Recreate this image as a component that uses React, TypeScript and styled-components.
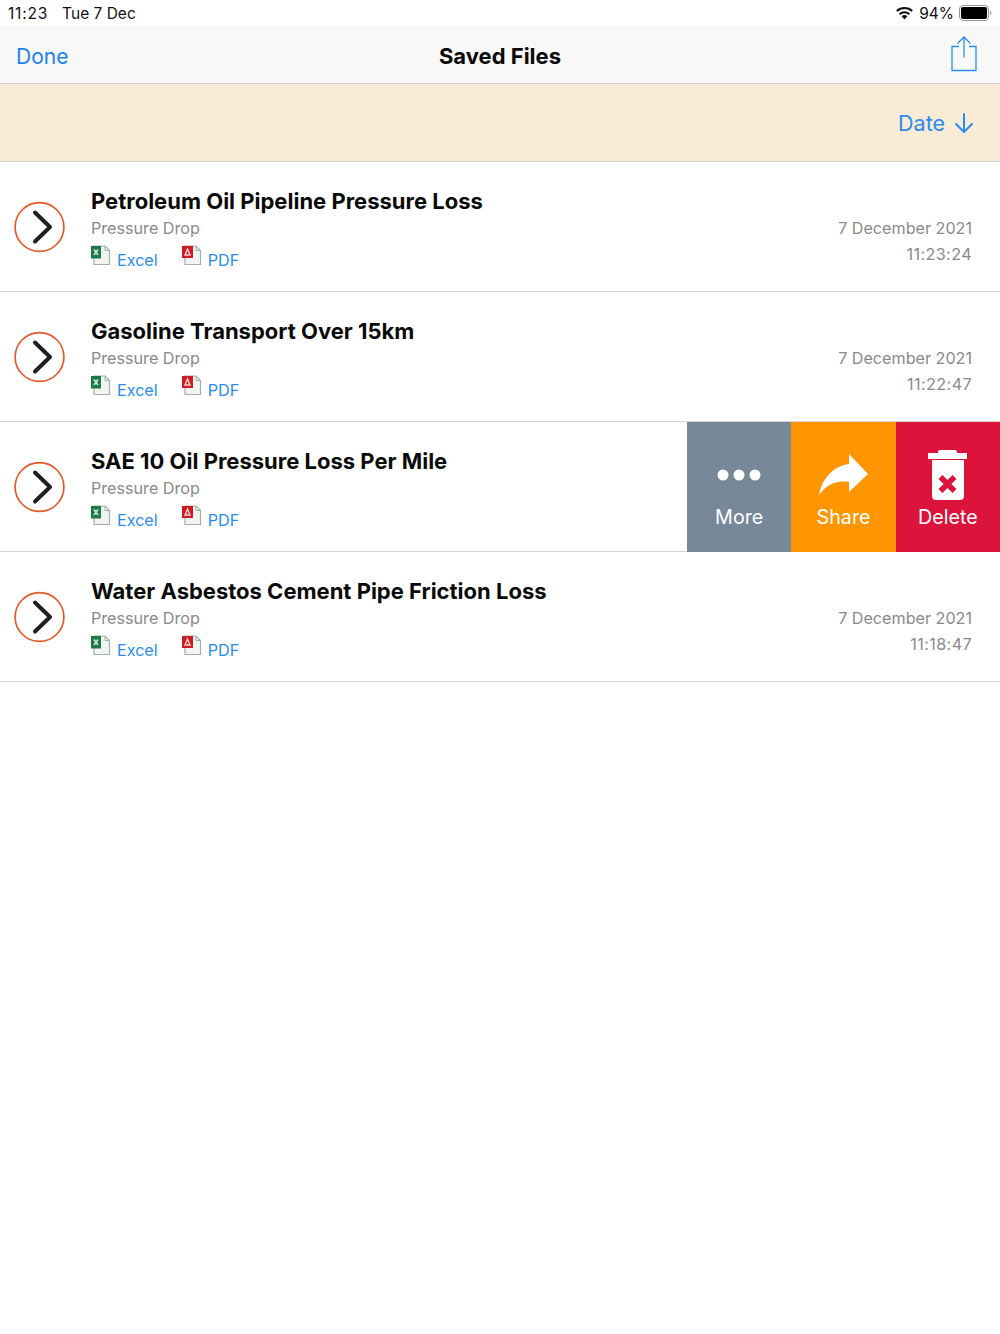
import styled, { createGlobalStyle } from "styled-components"

const GlobalStyle = createGlobalStyle`
  html, body {
    margin: 0;
    padding: 0;
    background: #fff;
    font-family: Inter, "Liberation Sans", Arial, sans-serif;
  }
`

const Page = styled.div`
  width: 1000px;
  height: 1334px;
  display: flex;
  flex-direction: column;
  background: #fff;
  overflow: hidden;
`

const StatusBar = styled.div`
  height: 26px;
  padding: 0 7px 0 8px;
  box-sizing: border-box;
  display: flex;
  align-items: center;
  justify-content: space-between;
  font-size: 15.5px;
  color: #111;
`

const StatusGroup = styled.div<{ $gap: number }>`
  display: flex;
  align-items: center;
  gap: ${(p) => p.$gap}px;
`

const Clock = styled.span`
  letter-spacing: 0.8px;
`

const NavBar = styled.div`
  height: 58px;
  padding: 2px 23px 0 16px;
  box-sizing: border-box;
  display: flex;
  align-items: center;
  justify-content: space-between;
  background: #f8f8f8;
  border-bottom: 1px solid #cfcfcf;
`

const NavLink = styled.div`
  width: 87px;
  padding-top: 1px;
  font-size: 21px;
  color: #1a7ff0;
`

const NavTitle = styled.div`
  font-size: 22px;
  font-weight: 700;
  color: #0a0a0a;
`

const NavAction = styled.div`
  width: 80px;
  margin-top: -4px;
  display: flex;
  justify-content: flex-end;
`

const SortBar = styled.div`
  height: 78px;
  padding: 0 26px 0 0;
  box-sizing: border-box;
  display: flex;
  align-items: center;
  justify-content: flex-end;
  gap: 9px;
  background: #faebd7;
  border-bottom: 1px solid #d6d6d6;
  font-size: 21.5px;
  color: #2a8cf0;
`

const Row = styled.div`
  height: 130px;
  box-sizing: border-box;
  display: flex;
  align-items: stretch;
  border-bottom: 1px solid #d4d4d4;
`

const Arrow = styled.div`
  width: 91px;
  flex-shrink: 0;
  padding-left: 14px;
  box-sizing: border-box;
  display: flex;
  align-items: center;
`

const Body = styled.div`
  flex: 1;
  padding-top: 25px;
`

const Title = styled.div`
  font-size: 22px;
  line-height: 28px;
  font-weight: 700;
  color: #0a0a0a;
`

const Subtitle = styled.div`
  margin-top: 1px;
  font-size: 16.15px;
  line-height: 24px;
  color: #8a8a8a;
`

const Files = styled.div`
  margin-top: 5px;
  display: flex;
  gap: 24px;
`

const FileLink = styled.div`
  display: flex;
  align-items: flex-start;
  gap: 6px;
  padding-top: 4px;
  font-size: 16.15px;
  line-height: 23px;
  color: #2a8cf0;
`

const FileIcon = styled.svg`
  margin-top: -4px;
`

const Stamp = styled.div`
  padding: 53px 28px 0 0;
  text-align: right;
  font-size: 16.15px;
  line-height: 26px;
  color: #8a8a8a;
`

const StampTime = styled.span`
  letter-spacing: 0.4px;
`

const Actions = styled.div`
  display: flex;
  margin-bottom: -1px;
`

const ActionButton = styled.div<{ $bg: string }>`
  width: 104.33px;
  display: flex;
  flex-direction: column;
  align-items: center;
  background: ${(p) => p.$bg};
  color: #fff;
  font-size: 19.7px;
`

const ActionIcon = styled.div`
  height: 83px;
  padding-top: 22px;
  box-sizing: border-box;
  display: flex;
  align-items: center;
  justify-content: center;
`

const ActionLabel = styled.div`
  line-height: 24px;
`

const ArrowIcon = () => (
  <svg width="52" height="52" viewBox="0 0 52 52">
    <circle cx="25.5" cy="26" r="24.4" fill="#fff" stroke="#e2592a" strokeWidth="1.7" />
    <path d="M21 11.5 L36 26 L21 40.5" fill="none" stroke="#1f1f1f" strokeWidth="4" strokeLinecap="round" strokeLinejoin="round" />
  </svg>
)

const SheetBack = () => (
  <>
    <path d="M3 1 H14 L18.5 5.5 V19.5 H3 Z" fill="#f2f4f2" stroke="#a3b0a8" strokeWidth="1.2" />
    <path d="M14 1 V5.5 H18.5" fill="none" stroke="#a3b0a8" strokeWidth="1" />
  </>
)

const ExcelIcon = () => (
  <FileIcon width="20" height="21" viewBox="0 0 20 21">
    <SheetBack />
    <rect x="0" y="1" width="10" height="12.5" fill="#1e7a45" />
    <path d="M3 4.5 L7 10 M7 4.5 L3 10" stroke="#d8eadf" strokeWidth="1.5" />
  </FileIcon>
)

const PdfIcon = () => (
  <FileIcon width="20" height="21" viewBox="0 0 20 21">
    <SheetBack />
    <rect x="0" y="1" width="11" height="12" fill="#cf1a24" />
    <path d="M5.5 4 L3 10 H8 Z" fill="none" stroke="#f6d5d5" strokeWidth="1.4" />
  </FileIcon>
)

const FileRow = () => (
  <Files>
    <FileLink>
      <ExcelIcon />
      Excel
    </FileLink>
    <FileLink>
      <PdfIcon />
      PDF
    </FileLink>
  </Files>
)

const files = [
  { title: "Petroleum Oil Pipeline Pressure Loss", time: "11:23:24" },
  { title: "Gasoline Transport Over 15km", time: "11:22:47" },
  { title: "SAE 10 Oil Pressure Loss Per Mile", swiped: true },
  { title: "Water Asbestos Cement Pipe Friction Loss", time: "11:18:47" },
]

export default function App() {
  return (
    <Page>
      <GlobalStyle />
      <StatusBar>
        <StatusGroup $gap={14}>
          <Clock>11:23</Clock>
          <span>Tue 7 Dec</span>
        </StatusGroup>
        <StatusGroup $gap={5}>
          <svg width="19" height="14" viewBox="0 0 19 14">
            <path d="M9.5 13.5 L6.6 10.2 A4.4 4.4 0 0 1 12.4 10.2 Z" fill="#111" />
            <path d="M4.6 8.2 A7.4 7.4 0 0 1 14.4 8.2 M1.8 5 A11.4 11.4 0 0 1 17.2 5" fill="none" stroke="#111" strokeWidth="2" />
          </svg>
          <span>94%</span>
          <svg width="34" height="16" viewBox="0 0 34 16">
            <rect x="0.5" y="0.5" width="29" height="15" rx="3.5" fill="none" stroke="#999" />
            <rect x="2" y="2" width="26" height="12" rx="2" fill="#000" />
            <path d="M31 5.5 A3 3 0 0 1 31 10.5 Z" fill="#999" />
          </svg>
        </StatusGroup>
      </StatusBar>
      <NavBar>
        <NavLink>Done</NavLink>
        <NavTitle>Saved Files</NavTitle>
        <NavAction>
          <svg width="26" height="36" viewBox="0 0 26 36" fill="none" stroke="#2a8cf0" strokeWidth="1.3">
            <path d="M8 10.5 H1 V34.5 H25 V10.5 H18" />
            <path d="M13 21.5 V1 M6.5 7.5 L13 1 L19.5 7.5" />
          </svg>
        </NavAction>
      </NavBar>
      <SortBar>
        Date
        <svg width="20" height="20" viewBox="0 0 20 20" fill="none" stroke="#2a8cf0" strokeWidth="2" strokeLinecap="round" strokeLinejoin="round">
          <path d="M10 1 V19 M2 11 L10 19 L18 11" />
        </svg>
      </SortBar>
      {files.map((file) => (
        <Row key={file.title}>
          <Arrow>
            <ArrowIcon />
          </Arrow>
          <Body>
            <Title>{file.title}</Title>
            <Subtitle>Pressure Drop</Subtitle>
            <FileRow />
          </Body>
          {file.swiped ? (
            <Actions>
              <ActionButton $bg="#778899">
                <ActionIcon>
                  <svg width="46" height="14" viewBox="0 0 46 14" fill="#fff">
                    <circle cx="7" cy="7" r="5.5" />
                    <circle cx="23" cy="7" r="5.5" />
                    <circle cx="39" cy="7" r="5.5" />
                  </svg>
                </ActionIcon>
                <ActionLabel>More</ActionLabel>
              </ActionButton>
              <ActionButton $bg="#ff9500">
                <ActionIcon>
                  <svg width="50" height="42" viewBox="0 0 50 42" fill="#fff">
                    <path d="M30 0 L49 20 L30 38 V28 C17 26 7 31 0 41 C3 25 14 12 30 10 Z" />
                  </svg>
                </ActionIcon>
                <ActionLabel>Share</ActionLabel>
              </ActionButton>
              <ActionButton $bg="#dc143c">
                <ActionIcon>
                  <svg width="40" height="50" viewBox="0 0 40 50">
                    <path d="M0 3 H10 V2 Q10 0 12 0 H27 Q29 0 29 2 V3 H39 V9 H0 Z" fill="#fff" />
                    <path d="M4 10 H36 V46 Q36 50 32 50 H8 Q4 50 4 46 Z" fill="#fff" />
                    <path d="M12.5 27 L26.5 41 M26.5 27 L12.5 41" stroke="#dc143c" strokeWidth="5.5" />
                  </svg>
                </ActionIcon>
                <ActionLabel>Delete</ActionLabel>
              </ActionButton>
            </Actions>
          ) : (
            <Stamp>
              7 December 2021
              <br />
              <StampTime>{file.time}</StampTime>
            </Stamp>
          )}
        </Row>
      ))}
    </Page>
  )
}
